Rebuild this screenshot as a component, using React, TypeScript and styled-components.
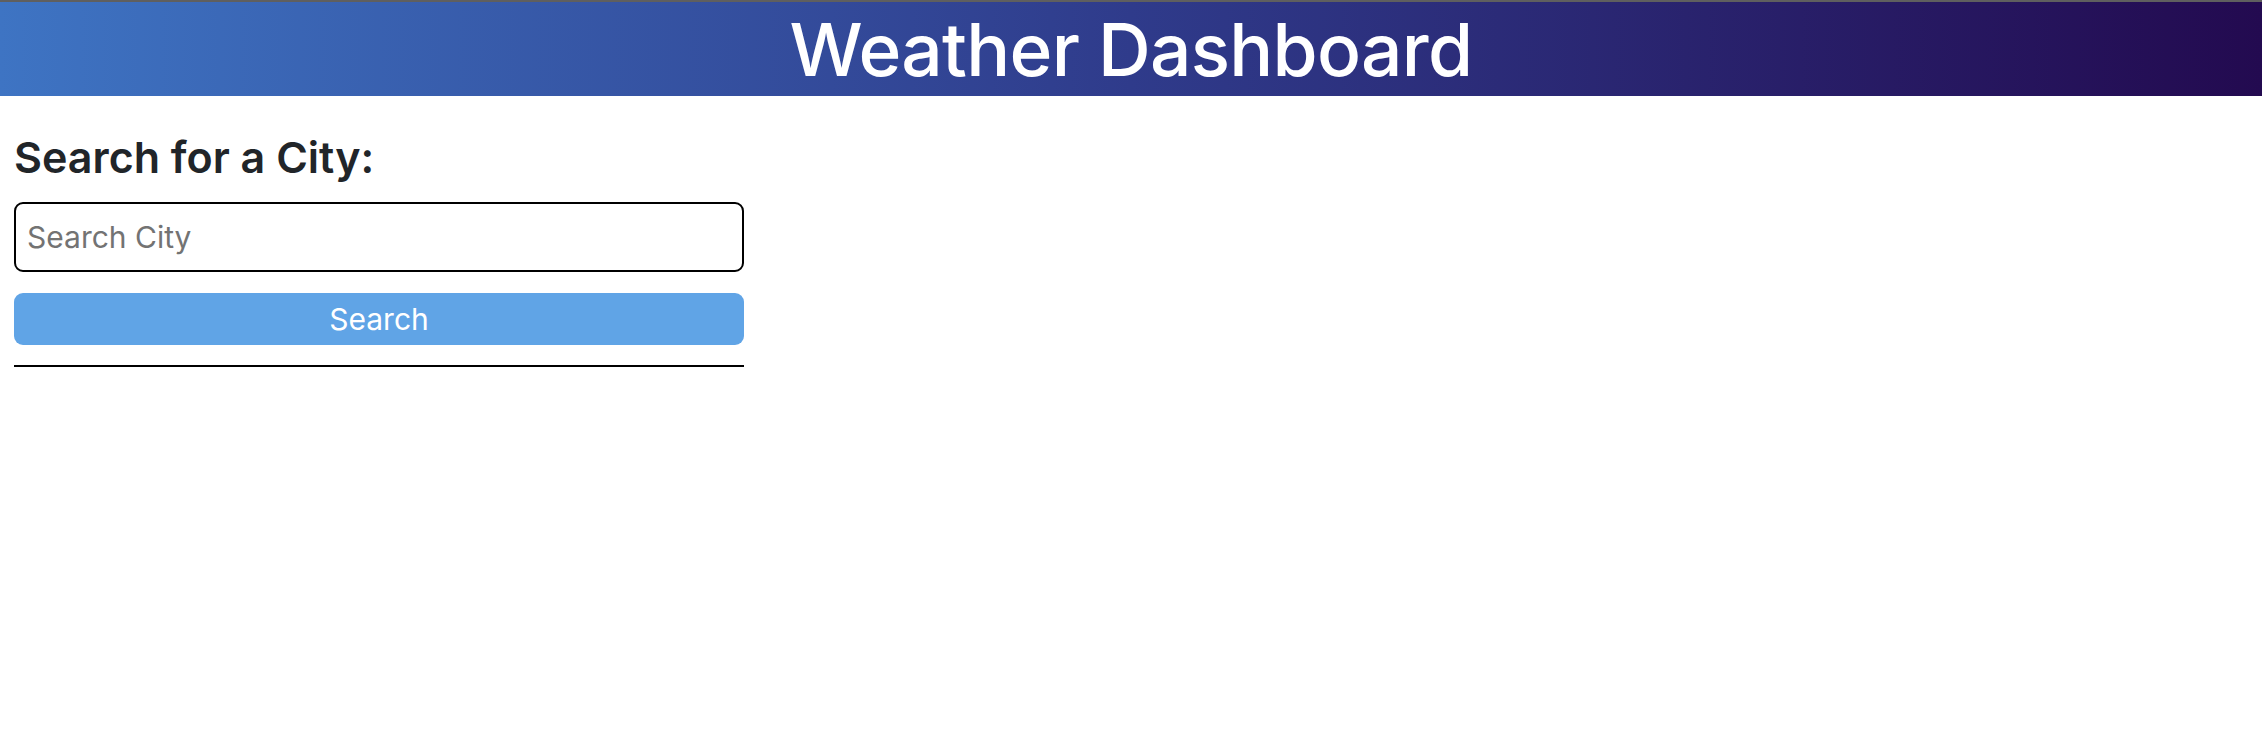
import React from "react";
import styled, { createGlobalStyle } from "styled-components";

const GlobalStyle = createGlobalStyle`
  html, body {
    margin: 0;
    padding: 0;
    background: #ffffff;
    font-family: Inter, "Liberation Sans", Arial, sans-serif;
    color: #212529;
  }
  * { box-sizing: border-box; }
`;

const Header = styled.header`
  height: 96px;
  border-top: 2px solid #5f5f5f;
  background: linear-gradient(90deg, #3e74c3 0%, #2f3b8b 50%, #230a50 100%);
  display: flex;
  align-items: center;
  justify-content: center;
`;

const Title = styled.h1`
  margin: 0;
  color: #ffffff;
  font-family: Inter, "Liberation Sans", Arial, sans-serif;
  font-weight: 500;
  font-size: 73px;
  line-height: 1;
  letter-spacing: -0.7px;
`;

const Sidebar = styled.aside`
  width: 744px;
  padding: 36px 0 0 14px;
  display: flex;
  flex-direction: column;
`;

const Heading = styled.h2`
  margin: 0 0 18px 0;
  font-size: 43px;
  font-weight: 600;
  line-height: 1.2;
  color: #212529;
`;

const SearchInput = styled.input`
  height: 70px;
  width: 100%;
  border: 2px solid #000000;
  border-radius: 9px;
  padding: 0 11px;
  font-family: Inter, "Liberation Sans", Arial, sans-serif;
  font-size: 30px;
  color: #212529;
  outline: none;
  &::placeholder {
    color: #737373;
  }
`;

const SearchButton = styled.button`
  margin-top: 21px;
  height: 52px;
  width: 100%;
  border: none;
  border-radius: 9px;
  background: #60a4e6;
  color: #ffffff;
  font-family: Inter, "Liberation Sans", Arial, sans-serif;
  font-size: 30px;
  cursor: pointer;
`;

const Divider = styled.hr`
  margin: 20px 0 0 0;
  border: none;
  border-top: 2px solid #000000;
  width: 100%;
`;

export default function App() {
  return (
    <>
      <GlobalStyle />
      <Header>
        <Title>Weather Dashboard</Title>
      </Header>
      <Sidebar>
        <Heading>Search for a City:</Heading>
        <SearchInput placeholder="Search City" />
        <SearchButton>Search</SearchButton>
        <Divider />
      </Sidebar>
    </>
  );
}
